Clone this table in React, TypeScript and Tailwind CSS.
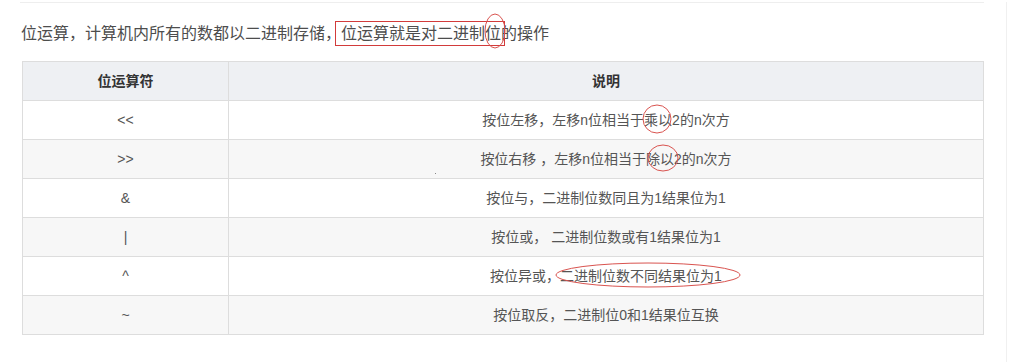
const rows: [string, string][] = [
  ['<<', '按位左移，左移n位相当于乘以2的n次方'],
  ['>>', '按位右移 ，左移n位相当于除以2的n次方'],
  ['&', '按位与，二进制位数同且为1结果位为1'],
  ['|', '按位或， 二进制位数或有1结果位为1'],
  ['^', '按位异或，二进制位数不同结果位为1'],
  ['~', '按位取反，二进制位0和1结果位互换'],
];

function Marks() {
  return (
    <svg
      className="pointer-events-none absolute left-0 top-0"
      width={1010}
      height={362}
      viewBox="0 0 1010 362"
      fill="none"
      aria-hidden
    >
      <rect x={335.5} y={21.5} width={169} height={24} stroke="#d23b3b" strokeWidth={1} />
      <ellipse cx={495} cy={31} rx={10} ry={17} stroke="#d9534f" strokeWidth={1} />
      <ellipse cx={657} cy={119} rx={14} ry={14} stroke="#d9534f" strokeWidth={1} />
      <ellipse cx={663} cy={158} rx={15} ry={13} stroke="#d9534f" strokeWidth={1} />
      <ellipse cx={648} cy={275} rx={92} ry={12} stroke="#d9534f" strokeWidth={1} />
      <rect x={435} y={173} width={1} height={1} fill="#888" />
    </svg>
  );
}

export default function App() {
  return (
    <div
      className="relative h-[362px] w-[1010px] overflow-hidden bg-white"
      style={{ fontFamily: '"Liberation Sans", "Noto Sans CJK SC", sans-serif' }}
    >
      <div className="h-full w-[1007px] border-r border-[#f0f0f0]">
        <div className="ml-[20px] mt-[2px] w-[964px] border-t border-[#eeeeee] pt-[19px]">
          <p className="pl-px text-[16px] leading-[24px] text-[#4d4d4d]">
            位运算，计算机内所有的数都以二进制存储，位运算就是对二进制位的操作
          </p>
          <table className="ml-[2px] mt-[15px] w-[962px] border-collapse text-[14px] text-[#555555]">
            <thead>
              <tr className="h-[39px] bg-[#eef0f3]">
                <th className="w-[206px] border border-[#dddddd] font-bold text-[#333333]">位运算符</th>
                <th className="border border-[#dddddd] font-bold text-[#333333]">说明</th>
              </tr>
            </thead>
            <tbody>
              {rows.map(([op, desc], i) => (
                <tr key={op} className={i % 2 === 1 ? 'h-[39px] bg-[#f7f7f7]' : 'h-[39px] bg-white'}>
                  <td className="border border-[#dddddd] text-center">{op}</td>
                  <td className="border border-[#dddddd] text-center">{desc}</td>
                </tr>
              ))}
            </tbody>
          </table>
        </div>
      </div>
      <Marks />
    </div>
  );
}
